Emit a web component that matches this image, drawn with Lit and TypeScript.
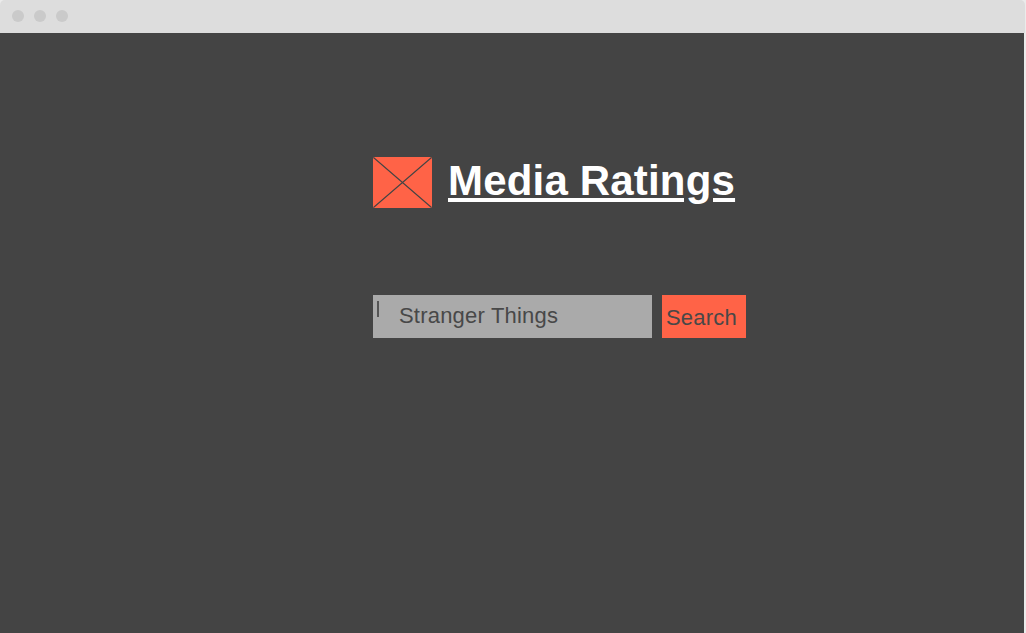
import { LitElement, html, css } from "lit";
import { customElement } from "lit/decorators.js";

@customElement("app-root")
export class AppRoot extends LitElement {
  static styles = css`
    :host { display: block; width: 1026px; height: 633px; overflow: hidden; background: #ebebeb; font-family: "Liberation Sans", Arial, sans-serif; }
    .bar { display: flex; align-items: center; gap: 10px; box-sizing: border-box; width: 1025px; height: 33px; padding: 0 12px 1px; background: #ddd; border-radius: 5px 5px 0 0; }
    .dot { width: 12px; height: 12px; border-radius: 50%; background: #cacaca; }
    .content { box-sizing: border-box; width: 1024px; height: 600px; padding: 124px 0 0 373px; background: #444; }
    .brand { display: flex; height: 51px; }
    .logo { display: block; width: 59px; height: 51px; }
    h1 { margin: 0 0 0 16px; font-size: 42px; line-height: 48px; letter-spacing: 0.18px; font-weight: 700; color: #fff; text-decoration: underline; white-space: nowrap; }
    .search { display: flex; gap: 10px; margin-top: 87px; height: 43px; font-size: 22px; letter-spacing: 0.2px; color: #484848; white-space: nowrap; }
    .field { display: flex; box-sizing: border-box; width: 279px; padding: 6px 0 0 4px; background: #aaa; line-height: 29px; }
    .caret { width: 2px; height: 16px; margin-right: 20px; background: #555; }
    .button { box-sizing: border-box; width: 84px; padding-left: 4px; background: #ff6347; line-height: 45px; }
  `;
  render() {
    return html`
      <div class="bar"><i class="dot"></i><i class="dot"></i><i class="dot"></i></div>
      <main class="content">
        <div class="brand">
          <svg class="logo" viewBox="0 0 59 51"><rect width="59" height="51" rx="1.5" fill="#ff6347"/><path d="M.5.5 58.5 50.5M58.5.5.5 50.5" stroke="#444" stroke-width="1.1" fill="none"/></svg>
          <h1>Media Ratings</h1>
        </div>
        <div class="search">
          <div class="field"><span class="caret"></span><span>Stranger Things</span></div>
          <div class="button" role="button">Search</div>
        </div>
      </main>`;
  }
}
